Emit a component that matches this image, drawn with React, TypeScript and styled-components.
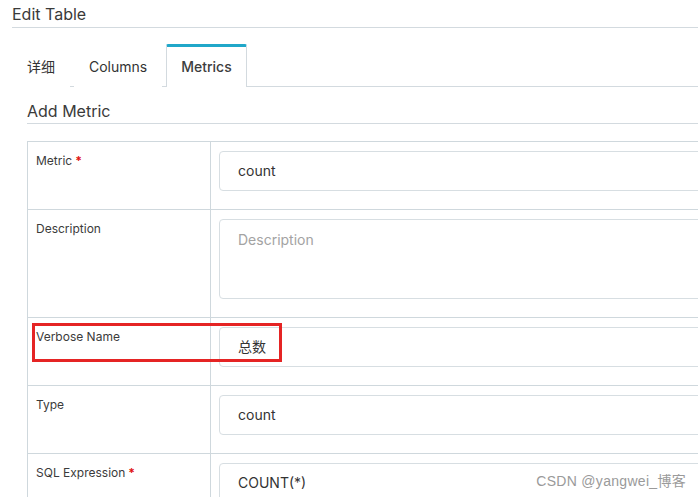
import { Fragment } from 'react';
import styled, { createGlobalStyle } from 'styled-components';

const GlobalStyle = createGlobalStyle`
	html, body {
		margin: 0;
		padding: 0;
		background: #ffffff;
		overflow: hidden;
	}
	body {
		font-family: Inter, 'Noto Sans CJK SC', sans-serif;
		color: #333333;
	}
`;

const Page = styled.div`
	position: relative;
	width: 698px;
	height: 497px;
	padding-left: 12px;
	box-sizing: border-box;
	overflow: hidden;
`;

const Title = styled.div`
	height: 27px;
	line-height: 28px;
	font-size: 16px;
	color: #3a3a3a;
	border-bottom: 1px solid #d3dadf;
`;

const TabBar = styled.div`
	display: flex;
	margin-top: 16px;
	border-bottom: 1px solid #d3dadf;
`;

const Tab = styled.div<{ $active?: boolean }>`
	padding: 0 14px 1px;
	margin-right: 4px;
	margin-bottom: -1px;
	height: 39px;
	line-height: 40px;
	font-size: 14px;
	font-weight: ${(p) => (p.$active ? 500 : 400)};
	color: ${(p) => (p.$active ? '#3d3d3d' : '#333333')};
	border: 1px solid ${(p) => (p.$active ? '#d3dadf' : 'transparent')};
	border-top: 3px solid ${(p) => (p.$active ? '#20a7c9' : 'transparent')};
	border-bottom: none;
	border-radius: 2px 2px 0 0;
	background: #ffffff;
`;

const Section = styled.div`
	padding-left: 15px;
`;

const SectionTitle = styled.div`
	height: 36px;
	line-height: 48px;
	font-size: 16px;
	color: #3a3a3a;
	border-bottom: 1px solid #d3dadf;
`;

const TableWrap = styled.div`
	position: relative;
	margin-top: 17px;
	width: 720px;
`;

const Table = styled.div`
	display: grid;
	grid-template-columns: 183px 1fr;
	border-top: 1px solid #cfd8dd;
	border-left: 1px solid #cfd8dd;
`;

const Label = styled.div`
	padding: 11px 8px 0 8px;
	font-size: 12px;
	line-height: 16px;
	color: #3b3b3b;
	border-right: 1px solid #cfd8dd;
	border-bottom: 1px solid #cfd8dd;
`;

const Star = styled.span`
	color: #e01010;
	font-weight: 700;
	margin-left: 3px;
`;

const Field = styled.div`
	padding: 9px 0 18px 8px;
	border-bottom: 1px solid #cfd8dd;
`;

const Input = styled.div<{ $tall?: boolean; $placeholder?: boolean }>`
	box-sizing: border-box;
	height: ${(p) => (p.$tall ? '80px' : '40px')};
	padding: ${(p) => (p.$tall ? '10px 18px' : '0 18px')};
	line-height: ${(p) => (p.$tall ? '20px' : '38px')};
	font-size: 14px;
	color: ${(p) => (p.$placeholder ? '#a3a3a3' : '#333333')};
	border: 1px solid #d7dee2;
	border-radius: 4px;
`;

const Annotation = styled.div`
	position: absolute;
	left: 5px;
	top: 182px;
	width: 250px;
	height: 39px;
	box-sizing: border-box;
	border: 3px solid #e52424;
	pointer-events: none;
`;

const Watermark = styled.div`
	position: absolute;
	right: 12px;
	top: 470px;
	font-family: 'Liberation Sans', 'Noto Sans CJK SC', sans-serif;
	font-size: 14px;
	color: #9a9a9a;
	letter-spacing: 0.3px;
`;

type Row = { label: string; value: string; required?: boolean; tall?: boolean; placeholder?: boolean };

const rows: Row[] = [
	{ label: 'Metric', value: 'count', required: true },
	{ label: 'Description', value: 'Description', tall: true, placeholder: true },
	{ label: 'Verbose Name', value: '总数' },
	{ label: 'Type', value: 'count' },
	{ label: 'SQL Expression', value: 'COUNT(*)', required: true },
];

export default function App() {
	return (
		<>
			<GlobalStyle />
			<Page>
				<Title>Edit Table</Title>
				<TabBar>
					<Tab>详细</Tab>
					<Tab>Columns</Tab>
					<Tab $active>Metrics</Tab>
				</TabBar>
				<Section>
					<SectionTitle>Add Metric</SectionTitle>
					<TableWrap>
						<Table>
							{rows.map((r) => (
								<Fragment key={r.label}>
									<Label>
										{r.label}
										{r.required && <Star>*</Star>}
									</Label>
									<Field>
										<Input $tall={r.tall} $placeholder={r.placeholder}>
											{r.value}
										</Input>
									</Field>
								</Fragment>
							))}
						</Table>
						<Annotation />
					</TableWrap>
				</Section>
				<Watermark>CSDN @yangwei_博客</Watermark>
			</Page>
		</>
	);
}
